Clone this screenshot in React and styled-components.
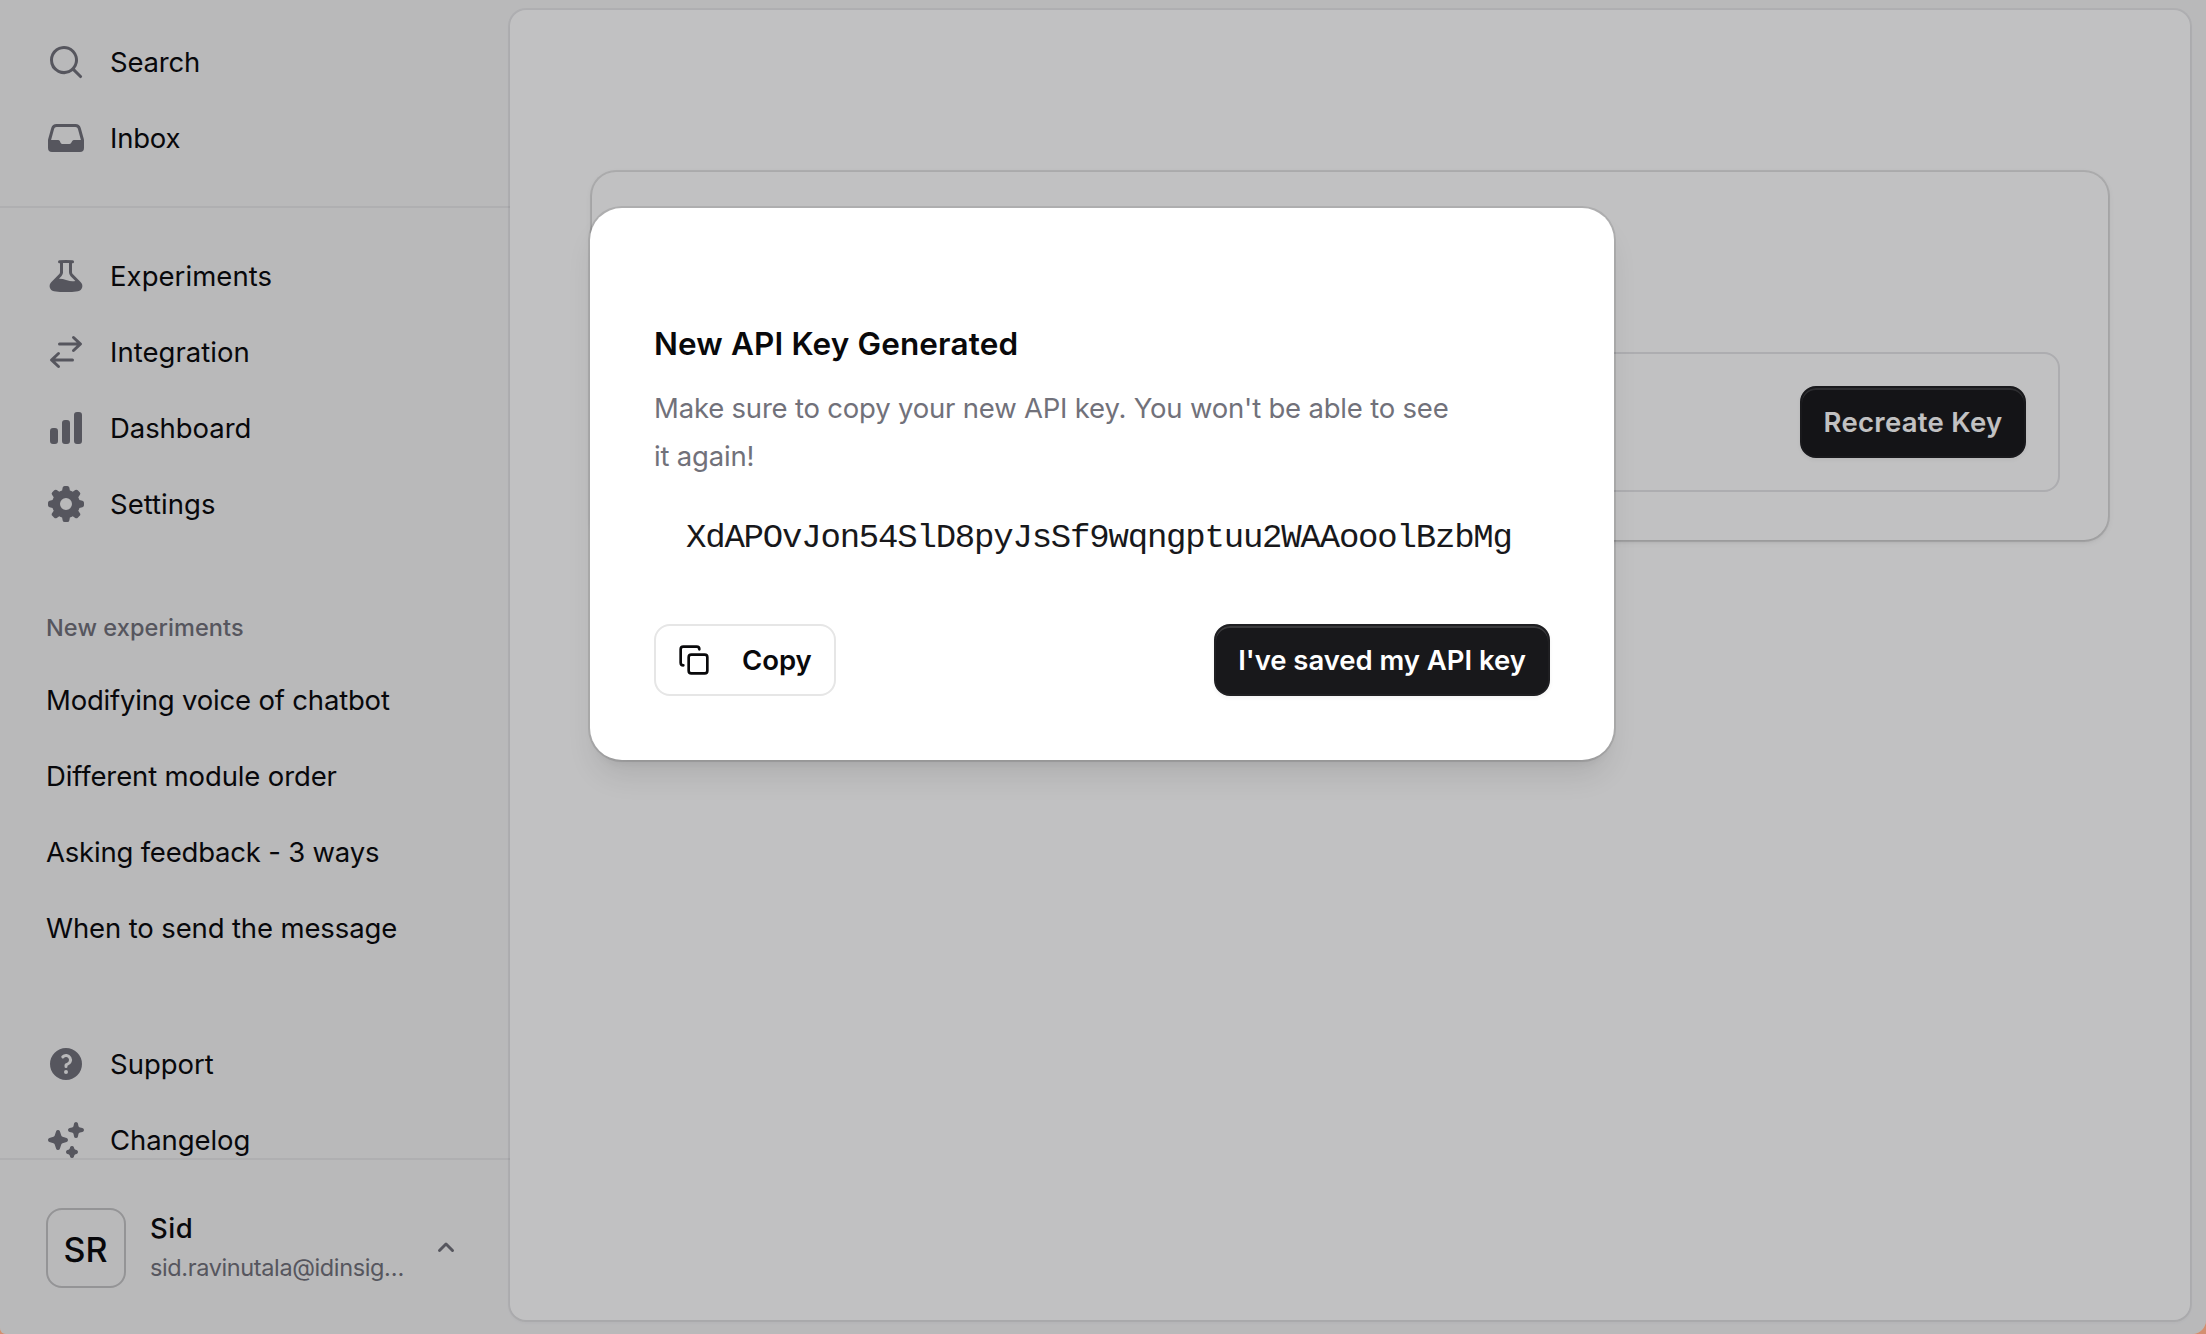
import React from "react";
import styled, { createGlobalStyle } from "styled-components";
import {
  HiMiniMagnifyingGlass,
  HiMiniInbox,
  HiMiniBeaker,
  HiMiniArrowsRightLeft,
  HiMiniChartBar,
  HiMiniCog8Tooth,
  HiMiniQuestionMarkCircle,
  HiMiniSparkles,
} from "react-icons/hi2";
import { Copy } from "lucide-react";

const GlobalStyle = createGlobalStyle`
  *, *::before, *::after { box-sizing: border-box; }
  html, body { margin: 0; padding: 0; background: #d38f70; }
  body {
    font-family: Inter, "Liberation Sans", sans-serif;
    font-size: 27.5px;
    line-height: 40px;
    color: #09090b;
    overflow: hidden;
  }
  button { font: inherit; margin: 0; cursor: pointer; }
`;

const Window = styled.div`
  position: relative;
  display: flex;
  width: 2206px;
  height: 1334px;
  overflow: hidden;
  background: #f4f4f5;
  border-radius: 0 0 14px 6px;
`;

const Sidebar = styled.nav`
  display: flex;
  flex-direction: column;
  width: 510px;
  flex: none;
`;

const SidebarHeader = styled.div`
  display: flex;
  flex-direction: column;
  gap: 4px;
  padding: 26px 32px 32px 30px;
  border-bottom: 2px solid rgba(9, 9, 11, 0.05);
`;

const SidebarBody = styled.div`
  display: flex;
  flex-direction: column;
  flex: 1;
  min-height: 0;
  gap: 64px;
  padding: 32px 32px 0 30px;
  overflow: hidden;
`;

const Section = styled.div`
  display: flex;
  flex-direction: column;
  flex: none;
  gap: 4px;
`;

const Heading = styled.h3`
  margin: 0 0 8px;
  padding: 0 16px;
  font-size: 23.5px;
  font-weight: 500;
  line-height: 48px;
  letter-spacing: 0.1px;
  color: #71717a;
`;

const Item = styled.a`
  display: flex;
  align-items: center;
  gap: 24px;
  height: 72px;
  padding: 0 16px;
  white-space: nowrap;
  letter-spacing: ${(p) => p.$track || 0}px;

  svg {
    width: 40px;
    height: 40px;
    flex: none;
    color: #71717a;
  }
`;

const SidebarFooter = styled.div`
  height: 176px;
  flex: none;
  padding: 32px 32px 32px 30px;
  border-top: 2px solid rgba(9, 9, 11, 0.05);
`;

const Account = styled.div`
  display: flex;
  align-items: center;
  gap: 24px;
  padding: 16px;
`;

const Avatar = styled.div`
  display: flex;
  align-items: center;
  justify-content: center;
  width: 80px;
  height: 80px;
  flex: none;
  padding: 3px 1px 0 0;
  border: 2px solid rgba(0, 0, 0, 0.2);
  border-radius: 16px;
  font-size: 34px;
  font-weight: 500;
`;

const Identity = styled.div`
  display: flex;
  flex-direction: column;
  flex: 1;
  min-width: 0;
  white-space: nowrap;
`;

const Name = styled.span`
  font-weight: 500;
  letter-spacing: 0.5px;
`;

const Email = styled.span`
  font-size: 23.5px;
  letter-spacing: -0.38px;
  color: #71717a;
`;

const Chevron = styled.svg`
  width: 32px;
  height: 32px;
  flex: none;
  fill: #71717a;
`;

const Main = styled.main`
  flex: 1;
  margin: 10px 16px 14px 0;
  padding: 162px 82px 0;
  background: #fff;
  border-radius: 16px;
  box-shadow: 0 0 0 2px rgba(9, 9, 11, 0.05), 0 2px 4px rgba(0, 0, 0, 0.05);
`;

const Card = styled.section`
  padding: 180px 48px 48px;
  border-radius: 24px;
  background: #fff;
  box-shadow: 0 0 0 2px rgba(9, 9, 11, 0.1), 0 2px 6px rgba(0, 0, 0, 0.1),
    0 2px 4px -2px rgba(0, 0, 0, 0.1);
`;

const KeyRow = styled.div`
  display: flex;
  justify-content: flex-end;
  padding: 32px;
  border: 2px solid #e4e4e7;
  border-radius: 16px;
`;

const Button = styled.button`
  display: flex;
  align-items: center;
  justify-content: center;
  width: ${(p) => p.$width}px;
  height: 72px;
  padding: 0;
  border: 2px solid #1f1f22;
  border-radius: 16px;
  background: #18181b;
  color: #fff;
  font-weight: 600;
  letter-spacing: ${(p) => p.$track || 0}px;
  white-space: nowrap;
  box-shadow: inset 0 2px 0 rgba(255, 255, 255, 0.15), 0 2px 4px rgba(0, 0, 0, 0.05);
`;

const OutlineButton = styled(Button)`
  justify-content: flex-start;
  gap: 32px;
  padding: 0 22px;
  border-color: rgba(9, 9, 11, 0.1);
  background: transparent;
  color: #09090b;
  box-shadow: none;
`;

const Backdrop = styled.div`
  position: absolute;
  inset: 0;
  display: flex;
  justify-content: center;
  align-items: flex-start;
  padding: 208px 2px 0 0;
  background: rgba(9, 9, 11, 0.25);
`;

const Dialog = styled.div`
  width: 1024px;
  height: 552px;
  padding: 112px 64px 64px;
  border-radius: 32px;
  background: #fff;
  box-shadow: 0 0 0 2px rgba(9, 9, 11, 0.1), 0 20px 30px -6px rgba(0, 0, 0, 0.1),
    0 8px 12px -8px rgba(0, 0, 0, 0.1);
`;

const Title = styled.h2`
  margin: 0;
  font-size: 31.5px;
  font-weight: 600;
  line-height: 48px;
  letter-spacing: 0.14px;
`;

const Description = styled.p`
  margin: 16px 0 0;
  max-width: 802px;
  line-height: 48px;
  letter-spacing: -0.2px;
  color: #71717a;
`;

const ApiKey = styled.div`
  margin: 34px 0 62px;
  padding: 0 32px;
  font-family: "Liberation Mono", "DejaVu Sans Mono", monospace;
  font-size: 34px;
  line-height: 48px;
  letter-spacing: -1.2px;
  white-space: nowrap;
  color: #18181b;
`;

const Actions = styled.div`
  display: flex;
  justify-content: space-between;
`;

const primary = [
  { label: "Search", Icon: HiMiniMagnifyingGlass, track: -0.2 },
  { label: "Inbox", Icon: HiMiniInbox, track: -0.2 },
];

const pages = [
  { label: "Experiments", Icon: HiMiniBeaker, track: 0.05 },
  { label: "Integration", Icon: HiMiniArrowsRightLeft, track: 0.03 },
  { label: "Dashboard", Icon: HiMiniChartBar, track: -0.06 },
  { label: "Settings", Icon: HiMiniCog8Tooth, track: 0.03 },
];

const experiments = [
  { label: "Modifying voice of chatbot", track: -0.19 },
  { label: "Different module order", track: -0.13 },
  { label: "Asking feedback - 3 ways", track: -0.2 },
  { label: "When to send the message", track: -0.13 },
];

const help = [
  { label: "Support", Icon: HiMiniQuestionMarkCircle, track: 0 },
  { label: "Changelog", Icon: HiMiniSparkles, track: -0.07 },
];

function Items({ items }) {
  return items.map(({ label, Icon, track }) => (
    <Item key={label} $track={track}>
      {Icon && <Icon />}
      <span>{label}</span>
    </Item>
  ));
}

export default function App() {
  return (
    <>
      <GlobalStyle />
      <Window>
        <Sidebar>
          <SidebarHeader>
            <Items items={primary} />
          </SidebarHeader>
          <SidebarBody>
            <Section>
              <Items items={pages} />
            </Section>
            <Section>
              <Heading>New experiments</Heading>
              <Items items={experiments} />
            </Section>
            <Section>
              <Items items={help} />
            </Section>
          </SidebarBody>
          <SidebarFooter>
            <Account>
              <Avatar>SR</Avatar>
              <Identity>
                <Name>Sid</Name>
                <Email>sid.ravinutala@idinsig…</Email>
              </Identity>
              <Chevron viewBox="0 0 16 16">
                <path d="M11.78 9.78a.75.75 0 0 1-1.06 0L8 7.06 5.28 9.78a.75.75 0 0 1-1.06-1.06l3.25-3.25a.75.75 0 0 1 1.06 0l3.25 3.25a.75.75 0 0 1 0 1.06Z" />
              </Chevron>
            </Account>
          </SidebarFooter>
        </Sidebar>
        <Main>
          <Card>
            <KeyRow>
              <Button $width={226} $track={0.3}>Recreate Key</Button>
            </KeyRow>
          </Card>
        </Main>
        <Backdrop>
          <Dialog role="dialog">
            <Title>New API Key Generated</Title>
            <Description>
              Make sure to copy your new API key. You won't be able to see it again!
            </Description>
            <ApiKey>XdAPOvJon54SlD8pyJsSf9wqngptuu2WAAooolBzbMg</ApiKey>
            <Actions>
              <OutlineButton $width={182} $track={-0.05}>
                <Copy size={32} />
                <span>Copy</span>
              </OutlineButton>
              <Button $width={336} $track={-0.04}>I've saved my API key</Button>
            </Actions>
          </Dialog>
        </Backdrop>
      </Window>
    </>
  );
}
